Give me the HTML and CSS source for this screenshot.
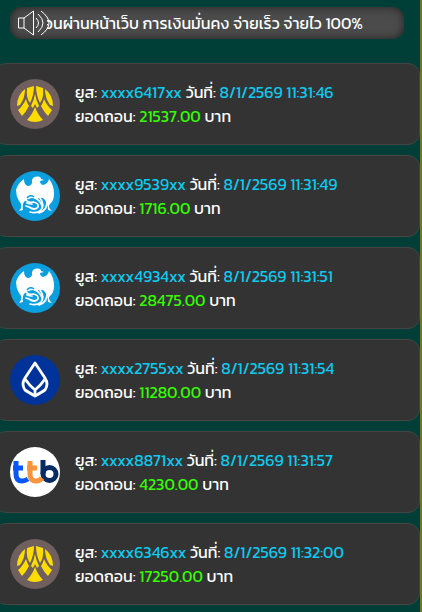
FILE: index.html
```html
<!DOCTYPE html>
<html lang="th">
<head>
    <meta charset="UTF-8">
    <meta name="viewport" content="width=device-width, initial-scale=1.0">
    <title>รายการถอนล่าสุด</title>
    <link rel="stylesheet" href="styles.css">
</head>
<body>
    <svg class="sprite" aria-hidden="true">
        <symbol id="bay" viewBox="0 0 50 50">
            <circle cx="25" cy="25" r="25" fill="#6f5f5e"/>
            <g fill="#ffdc00">
                <path d="M15 10Q7 16 7 27L10 26Q15 19 15 10Z"/>
                <path d="M17 9L24 7Q24 16 20 24Q16 19 17 9Z"/>
                <path d="M35 10Q43 16 43 27L40 26Q35 19 35 10Z"/>
                <path d="M33 9L26 7Q26 16 30 24Q34 19 33 9Z"/>
                <path d="M16 20Q17 24 19 27Q16 33 12 37L8 31Q13 27 16 20Z"/>
                <path d="M34 20Q33 24 31 27Q34 33 38 37L42 31Q37 27 34 20Z"/>
                <path d="M25 15Q26 21 29 27L27 29L25 25L23 29L21 27Q24 21 25 15Z"/>
                <path d="M25 28Q22 36 17 41Q25 45 33 41Q28 36 25 28Z"/>
            </g>
        </symbol>
        <symbol id="ktb" viewBox="0 0 50 50">
            <circle cx="25" cy="25" r="25" fill="#0c9fdf"/>
            <path fill="#fff" d="M22 12Q21 6 27 5.500Q31 5 31 8L34 9L30 10Q30 13 33 14Q38 13 39 8Q44 14 44 23Q44 30 40 33Q38 35 40 38L42 40L38 39Q38 33 35 29Q33 26 29 27Q26 29 22 27Q16 28 14 31Q12 34 13 39L9 40L11 37Q12 33 9 30Q6 25 6 19Q8 12 14 8Q14 14 18 15Q21 15 22 12Z"/>
            <path d="M17 27Q20 23 24 26M20 30Q24 26 25 30" fill="none" stroke="#0c9fdf" stroke-width="1.400"/>
            <path d="M16 29Q18 32 23 31Q29 32 28 36Q25 40 19 36L16 35M30 27Q35 34 31 39Q27 43 20 41M37 29Q38 39 29 42M22 33Q19 33 17 32M25 27Q30 29 32 35" fill="none" stroke="#fff" stroke-width="1.700" stroke-linecap="round"/>
        </symbol>
        <symbol id="bbl" viewBox="0 0 50 50">
            <circle cx="25" cy="25" r="25" fill="#003399"/>
            <g fill="none" stroke="#fff" stroke-width="2.800" stroke-linejoin="round">
                <path d="M25 8L15 23Q11 29 15 35Q18 37 25 41Q32 37 35 35Q39 29 35 23Z"/>
                <path d="M15 24Q19 30 25 35Q31 30 35 24M25 35V41"/>
            </g>
        </symbol>
        <symbol id="ttb" viewBox="0 0 50 50">
            <circle cx="25" cy="25" r="25" fill="#fff"/>
            <g fill="none" stroke-width="5">
                <path d="M33 13V27" stroke="#082b61"/>
                <circle cx="39.500" cy="27" r="6.500" stroke="#082b61"/>
                <path d="M17 21H27M20 14V27Q20 34 26 34Q30 34 32 31" stroke="#f7943d"/>
                <path d="M3 21H13M6 14V27Q6 34 12 34Q15 34 18 32" stroke="#0757f6"/>
            </g>
        </symbol>
    </svg>

    <div class="news">
        <svg class="news-icon" viewBox="0 0 34 28" fill="none" stroke="#fff" aria-hidden="true">
            <path d="M7 9H1.500V19H7M7 9L16.500 2V26L7 19Z"/>
            <path d="M19 9Q24 14 19 19M21 5Q31 14 21 23M24 2Q40 14 24 26"/>
        </svg>
        <div class="news-view">
            <p class="news-text">อนผ่านหน้าเว็บ การเงินมั่นคง จ่ายเร็ว จ่ายไว 100%</p>
        </div>
    </div>

    <main class="list">
        <div class="card">
            <svg class="bank"><use href="#bay"/></svg>
            <div class="info">
                <p>ยูส: <span class="user">xxxx6417xx</span> วันที่: <span class="user">8/1/2569 11:31:46</span></p>
                <p>ยอดถอน: <span class="amount">21537.00</span> บาท</p>
            </div>
        </div>
        <div class="card">
            <svg class="bank"><use href="#ktb"/></svg>
            <div class="info">
                <p>ยูส: <span class="user">xxxx9539xx</span> วันที่: <span class="user">8/1/2569 11:31:49</span></p>
                <p>ยอดถอน: <span class="amount">1716.00</span> บาท</p>
            </div>
        </div>
        <div class="card">
            <svg class="bank"><use href="#ktb"/></svg>
            <div class="info">
                <p>ยูส: <span class="user">xxxx4934xx</span> วันที่: <span class="user">8/1/2569 11:31:51</span></p>
                <p>ยอดถอน: <span class="amount">28475.00</span> บาท</p>
            </div>
        </div>
        <div class="card">
            <svg class="bank"><use href="#bbl"/></svg>
            <div class="info">
                <p>ยูส: <span class="user">xxxx2755xx</span> วันที่: <span class="user">8/1/2569 11:31:54</span></p>
                <p>ยอดถอน: <span class="amount">11280.00</span> บาท</p>
            </div>
        </div>
        <div class="card">
            <svg class="bank"><use href="#ttb"/></svg>
            <div class="info">
                <p>ยูส: <span class="user">xxxx8871xx</span> วันที่: <span class="user">8/1/2569 11:31:57</span></p>
                <p>ยอดถอน: <span class="amount">4230.00</span> บาท</p>
            </div>
        </div>
        <div class="card">
            <svg class="bank"><use href="#bay"/></svg>
            <div class="info">
                <p>ยูส: <span class="user">xxxx6346xx</span> วันที่: <span class="user">8/1/2569 11:32:00</span></p>
                <p>ยอดถอน: <span class="amount">17250.00</span> บาท</p>
            </div>
        </div>
    </main>
</body>
</html>
```
FILE: styles.css
```css
:root {
    --page-bg: #003f37;
    --card-bg: #333333;
    --edge: #6b7a22;
    --user: #0dcaf0;
    --amount: #33ff00;
}

* {
    margin: 0;
    padding: 0;
    box-sizing: border-box;
}

body {
    font-family: 'Kanit', 'Prompt', 'Noto Sans Thai', 'Open Sans', sans-serif;
    font-size: 16px;
    line-height: 24px;
    color: #ffffff;
    background: var(--page-bg);
    min-height: 100vh;
    padding-top: 7px;
    border-right: 2px solid var(--edge);
    overflow-x: hidden;
}

.sprite {
    display: none;
}

.news {
    display: flex;
    align-items: center;
    height: 32px;
    margin: 0 16px 24px 10px;
    padding: 0 41px 0 7px;
    border-radius: 12px;
    background: #4b4b4b;
    box-shadow: inset 0 0 8px #222222;
}

.news-icon {
    flex: none;
    width: 34px;
    height: 28px;
    margin-right: -4px;
}

/* the text runs out to the left, behind the speaker */
.news-view {
    flex: 1;
    min-width: 0;
    display: flex;
    justify-content: flex-end;
    overflow: hidden;
}

.news-text {
    flex: none;
    white-space: nowrap;
}

.list {
    display: flex;
    flex-direction: column;
    gap: 10px;
    margin-left: -6px;
}

.card {
    display: flex;
    align-items: center;
    gap: 15px;
    padding: 15px;
    border: 1px solid #444444;
    border-radius: 12px;
    background: var(--card-bg);
}

.bank {
    flex: none;
    width: 50px;
    height: 50px;
}

.info {
    white-space: nowrap;
}

.user {
    color: var(--user);
}

.amount {
    color: var(--amount);
}
```
